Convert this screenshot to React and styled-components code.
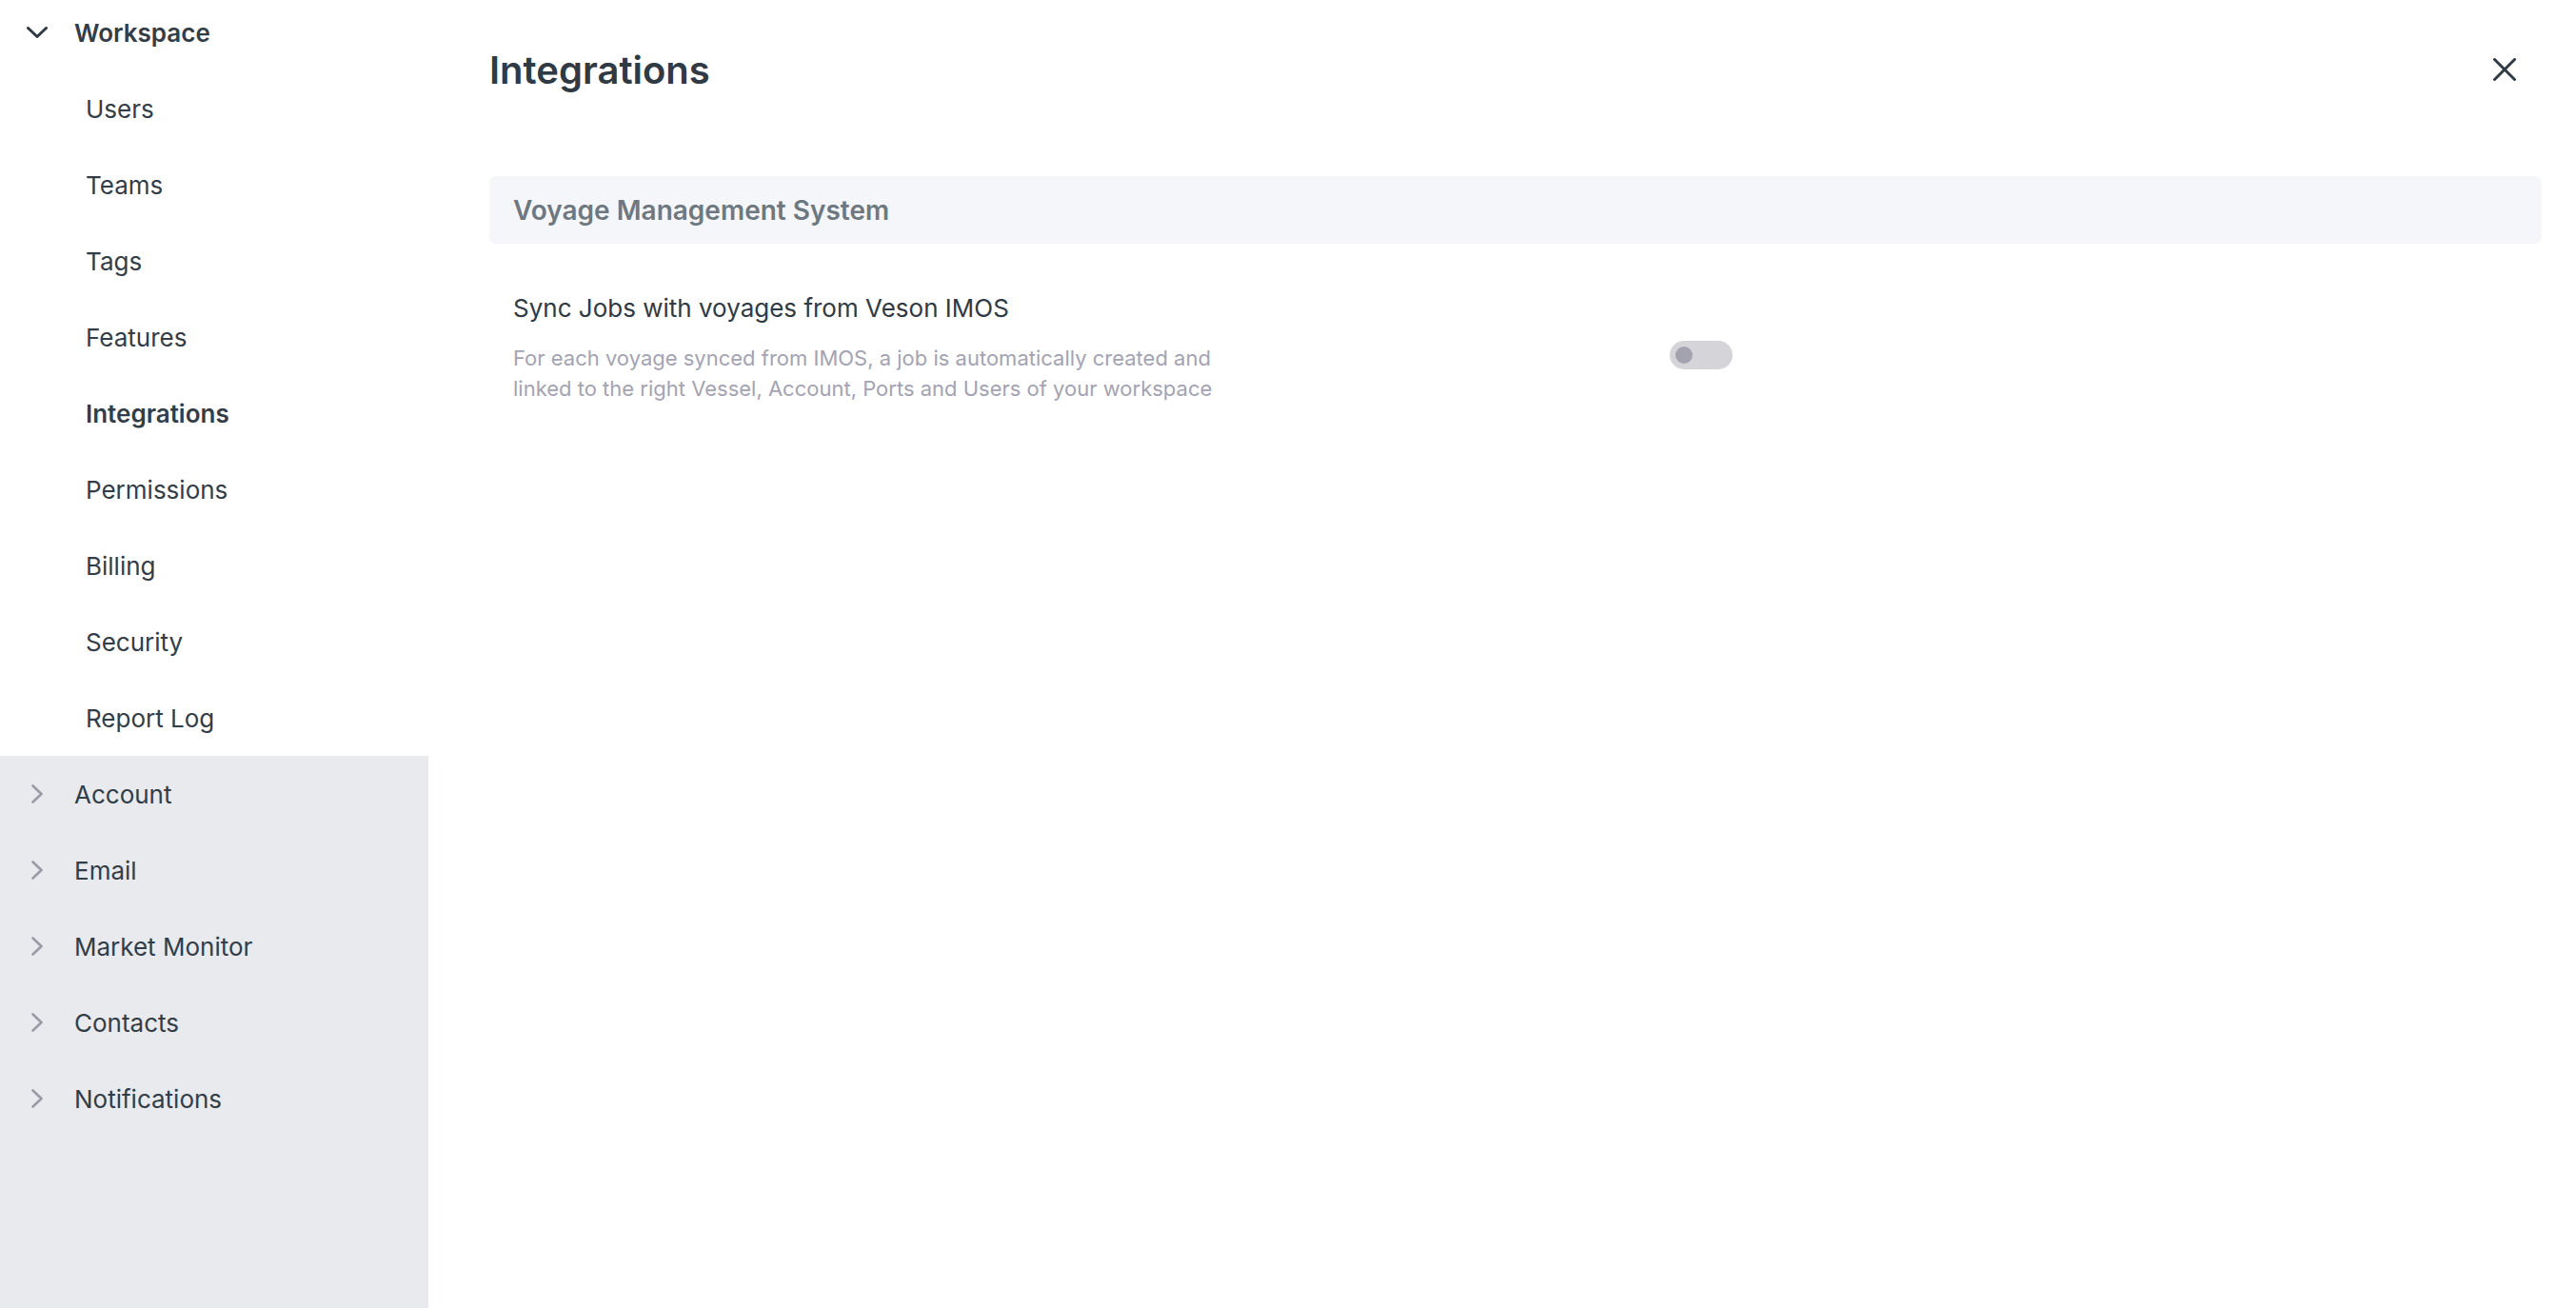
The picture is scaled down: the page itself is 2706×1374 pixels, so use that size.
import React from 'react';
import styled, { createGlobalStyle } from 'styled-components';

const GlobalStyle = createGlobalStyle`
    html, body {
        margin: 0;
        padding: 0;
        background: #ffffff;
    }
    body {
        font-family: Inter, "Noto Sans", "Liberation Sans", sans-serif;
        color: #323d48;
        -webkit-font-smoothing: antialiased;
    }
`

const workspaceItems = ['Users', 'Teams', 'Tags', 'Features', 'Integrations', 'Permissions', 'Billing', 'Security', 'Report Log'];
const collapsedGroups = ['Account', 'Email', 'Market Monitor', 'Contacts', 'Notifications'];

const ChevronDown = () => (
    <svg width="22" height="12" viewBox="0 0 22 12" fill="none">
        <polyline points="1.5,1.5 11,10.5 20.5,1.5" stroke="#2f3a45" strokeWidth="3" strokeLinecap="round" strokeLinejoin="round" />
    </svg>
);

const ChevronRight = () => (
    <svg width="12" height="20" viewBox="0 0 12 20" fill="none">
        <polyline points="1.5,1.5 10.5,10 1.5,18.5" stroke="#9b9ba8" strokeWidth="2.6" strokeLinecap="round" strokeLinejoin="round" />
    </svg>
);

const CloseIcon = () => (
    <svg width="24" height="24" viewBox="0 0 24 24" fill="none">
        <line x1="1.5" y1="1.5" x2="22.5" y2="22.5" stroke="#2f3a45" strokeWidth="3" strokeLinecap="round" />
        <line x1="22.5" y1="1.5" x2="1.5" y2="22.5" stroke="#2f3a45" strokeWidth="3" strokeLinecap="round" />
    </svg>
);

const App = () => {
    return (
        <>
        <GlobalStyle />
        <Page>
            <Sidebar>
                <Group>
                    <GroupHeader $open>
                        <IconBox><ChevronDown /></IconBox>
                        <GroupLabel $bold>Workspace</GroupLabel>
                    </GroupHeader>
                    <SubList>
                        {workspaceItems.map(item => (
                            <SubItem key={item} $active={item === 'Integrations'}>{item}</SubItem>
                        ))}
                    </SubList>
                </Group>
                <CollapsedArea>
                    {collapsedGroups.map(group => (
                        <GroupHeader key={group}>
                            <IconBox><ChevronRight /></IconBox>
                            <GroupLabel>{group}</GroupLabel>
                        </GroupHeader>
                    ))}
                </CollapsedArea>
            </Sidebar>

            <Main>
                <TitleBar>
                    <Title>Integrations</Title>
                    <CloseButton aria-label="Close"><CloseIcon /></CloseButton>
                </TitleBar>

                <SectionHeader>Voyage Management System</SectionHeader>

                <SettingRow>
                    <SettingText>
                        <SettingTitle>Sync Jobs with voyages from Veson IMOS</SettingTitle>
                        <SettingDescription>
                            For each voyage synced from IMOS, a job is automatically created and linked to the right Vessel, Account, Ports and Users of your workspace
                        </SettingDescription>
                    </SettingText>
                    <Toggle role="switch" aria-checked="false">
                        <Knob />
                    </Toggle>
                </SettingRow>
            </Main>
        </Page>
        </>
    );
}

export default App;


const Page = styled.div`
    display: flex;
    width: 100%;
    height: 100vh;
    overflow: hidden;
`

const Sidebar = styled.nav`
    width: 450px;
    flex: none;
    display: flex;
    flex-direction: column;
    background: #ffffff;
`

const Group = styled.div`
    display: flex;
    flex-direction: column;
`

const GroupHeader = styled.div`
    display: flex;
    align-items: center;
    gap: 28px;
    height: ${p => p.$open ? '68px' : '80px'};
    padding-left: 28px;
    cursor: pointer;
`

const IconBox = styled.span`
    width: 22px;
    display: flex;
    align-items: center;
    justify-content: center;
`

const GroupLabel = styled.span`
    font-size: 26px;
    font-weight: ${p => p.$bold ? 600 : 400};
    color: #323d48;
`

const SubList = styled.div`
    display: flex;
    flex-direction: column;
    padding-top: 6px;
`

const SubItem = styled.div`
    height: 80px;
    display: flex;
    align-items: center;
    padding-left: 90px;
    font-size: 26px;
    font-weight: ${p => p.$active ? 600 : 400};
    color: #323d48;
    cursor: pointer;
`

const CollapsedArea = styled.div`
    flex: 1;
    display: flex;
    flex-direction: column;
    background: #e8eaee;
`

const Main = styled.main`
    flex: 1;
    display: flex;
    flex-direction: column;
    padding: 0 36px 0 64px;
`

const TitleBar = styled.div`
    height: 146px;
    display: flex;
    align-items: center;
    justify-content: space-between;
    margin-bottom: 39px;
`

const Title = styled.h1`
    margin: 0;
    font-size: 40px;
    font-weight: 600;
    color: #2f3a45;
`

const CloseButton = styled.button`
    width: 40px;
    height: 40px;
    margin-right: 19px;
    padding: 0;
    border: none;
    background: transparent;
    display: flex;
    align-items: center;
    justify-content: center;
    cursor: pointer;
`

const SectionHeader = styled.div`
    height: 71px;
    display: flex;
    align-items: center;
    padding-left: 25px;
    border-radius: 8px;
    background: #f5f6f9;
    font-size: 28px;
    font-weight: 600;
    color: #6e7880;
`

const SettingRow = styled.div`
    display: flex;
    align-items: flex-start;
    padding: 50px 0 0 25px;
`

const SettingText = styled.div`
    width: 1215px;
    flex: none;
    display: flex;
    flex-direction: column;
    gap: 18px;
`

const SettingTitle = styled.div`
    font-size: 26px;
    line-height: 36px;
    color: #2f3a45;
`

const SettingDescription = styled.div`
    max-width: 760px;
    font-size: 22px;
    line-height: 32px;
    color: #a3a3b3;
`

const Toggle = styled.div`
    width: 66px;
    height: 30px;
    margin-top: 52px;
    border-radius: 15px;
    background: #d4d4d9;
    display: flex;
    align-items: center;
    padding-left: 6px;
    box-sizing: border-box;
    cursor: pointer;
`

const Knob = styled.span`
    width: 18px;
    height: 18px;
    border-radius: 50%;
    background: #a3a3af;
`
